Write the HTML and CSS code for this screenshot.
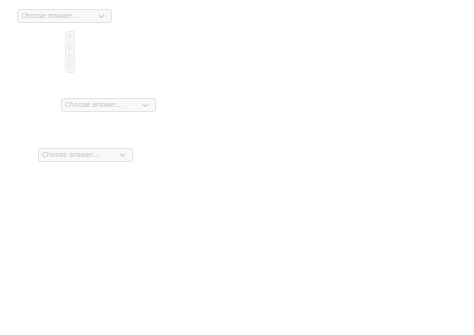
FILE: index.html
```html
<!DOCTYPE html>
<html>
<head>
<meta charset="utf-8">
<link rel="stylesheet" href="styles.css">
</head>
<body>
<div class="canvas">
  <div class="drop drop-1"><span class="ph">Choose answer...</span><svg class="chev" width="7" height="5" viewBox="0 0 7 5"><path d="M1 1l2.5 2.5L6 1" fill="none" stroke="#888" stroke-width="1.2"/></svg></div>
  <div class="vbar"><div class="seg seg-a"></div><div class="seg seg-b"></div><div class="seg seg-c"></div></div>
  <div class="drop drop-2"><span class="ph">Choose answer...</span><svg class="chev" width="7" height="5" viewBox="0 0 7 5"><path d="M1 1l2.5 2.5L6 1" fill="none" stroke="#888" stroke-width="1.2"/></svg></div>
  <div class="drop drop-3"><span class="ph">Choose answer...</span><svg class="chev" width="7" height="5" viewBox="0 0 7 5"><path d="M1 1l2.5 2.5L6 1" fill="none" stroke="#888" stroke-width="1.2"/></svg></div>
</div>
</body>
</html>
```
FILE: styles.css
```css
html, body { margin: 0; padding: 0; background: #fff; }
.canvas {
  width: 474px; height: 335px;
  display: flex; flex-direction: column; align-items: flex-start;
  opacity: 0.4;
  font-family: "Open Sans", sans-serif;
}
.drop {
  box-sizing: border-box;
  width: 95px; height: 14px;
  border: 1px solid #bbb;
  border-radius: 2px;
  background: #eee;
  display: flex; align-items: center; justify-content: space-between;
  padding: 0 6px 0 3px;
}
.ph { font-size: 7.2px; color: #666; line-height: 1; }
.drop-1 { margin: 9px 0 0 17px; }
.vbar {
  margin: 8px 0 0 65px;
  width: 10px; height: 42px;
  box-sizing: border-box;
  border: 1px solid #ccc;
  border-radius: 2px;
  background: #f4f4f4;
  display: flex; flex-direction: column; gap: 2px; padding: 1px;
}
.seg { background: #ddd; border-radius: 1px; }
.seg-a { height: 6px; }
.seg-b { height: 10px; }
.seg-c { flex: 1; }
.drop-2 { margin: 25px 0 0 61px; }
.drop-3 { margin: 36px 0 0 38px; }
```
